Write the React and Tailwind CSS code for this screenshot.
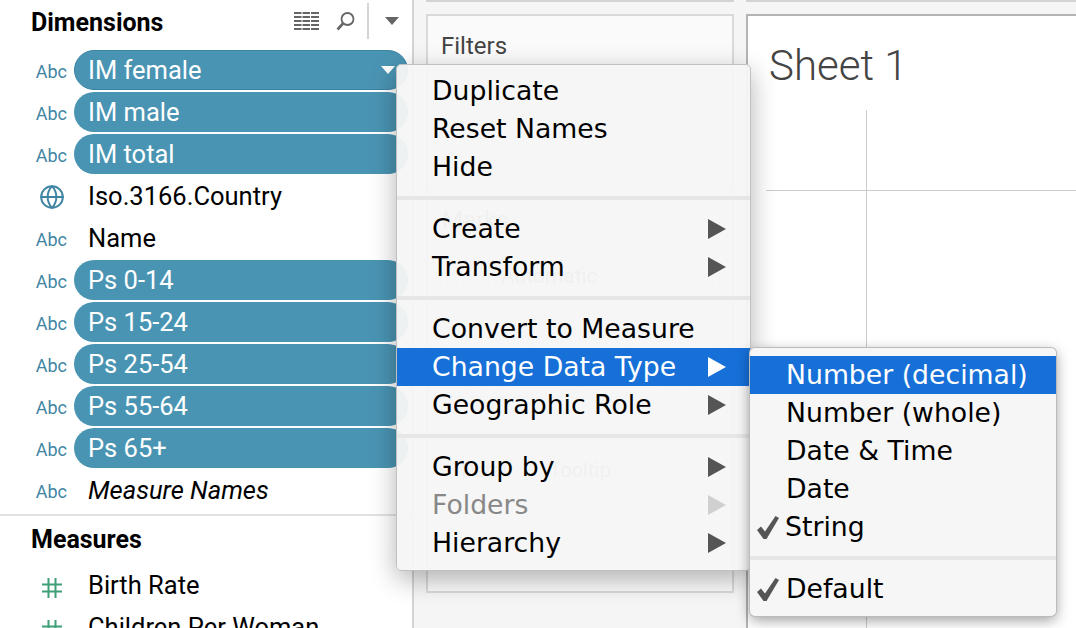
import { Globe } from 'lucide-react';

const fields = [
  { name: 'IM female', pill: true, first: true },
  { name: 'IM male', pill: true },
  { name: 'IM total', pill: true },
  { name: 'Iso.3166.Country', globe: true },
  { name: 'Name' },
  { name: 'Ps 0-14', pill: true },
  { name: 'Ps 15-24', pill: true },
  { name: 'Ps 25-54', pill: true },
  { name: 'Ps 55-64', pill: true },
  { name: 'Ps 65+', pill: true },
  { name: 'Measure Names', italic: true },
];

const mainMenu = [
  [{ label: 'Duplicate' }, { label: 'Reset Names' }, { label: 'Hide' }],
  [{ label: 'Create', sub: true }, { label: 'Transform', sub: true }],
  [{ label: 'Convert to Measure' }, { label: 'Change Data Type', sub: true, active: true }, { label: 'Geographic Role', sub: true }],
  [{ label: 'Group by', sub: true }, { label: 'Folders', sub: true, disabled: true }, { label: 'Hierarchy', sub: true }],
];

const TableIcon = () => (
  <svg width="25" height="18" viewBox="0 0 25 18" fill="#666">
    {[0, 4, 8, 12, 16].map((y) => (
      <g key={y}>
        <rect x="0" y={y} width="7.500" height="2" />
        <rect x="8.500" y={y} width="7.500" height="2" />
        <rect x="17" y={y} width="8" height="2" />
      </g>
    ))}
  </svg>
);

const SearchIcon = () => (
  <svg width="20" height="20" viewBox="0 0 20 20" fill="none" stroke="#666">
    <circle cx="11.500" cy="8" r="6" strokeWidth="1.800" />
    <path d="M7 12.500L1.500 18.500" strokeWidth="2.600" />
  </svg>
);

const Caret = ({ color = '#666', className = '' }) => (
  <svg width="14" height="8" viewBox="0 0 14 8" className={className}>
    <path d="M0 0H14L7 8Z" fill={color} />
  </svg>
);

const Arrow = ({ color = '#555' }) => (
  <svg width="18" height="20" viewBox="0 0 18 20">
    <path d="M0 0L18 10L0 20Z" fill={color} />
  </svg>
);

const Check = () => (
  <svg width="22" height="23" viewBox="0 0 22 23" className="absolute left-[7px] top-[8px]">
    <path d="M0 14L4 10.500L8 15.500L18.500 0L22 2L9.500 23H6.500Z" fill="#555" />
  </svg>
);

const HashIcon = () => (
  <svg width="20" height="20" viewBox="0 0 20 20" stroke="#3f9f78" strokeWidth="2">
    <path d="M0 6.500H20M0 13.500H20M6.500 0V20M13.500 0V20" />
  </svg>
);

const FieldRow = ({ field }) => (
  <div className="h-[42px] flex items-center shrink-0">
    <div className="w-[74px] flex justify-end pr-[7px] pt-[2px] text-[18px] text-[#3f85a3] font-['Roboto',sans-serif]">
      {field.globe ? <Globe size={26} strokeWidth={1.800} className="mr-[2px]" /> : 'Abc'}
    </div>
    {field.pill ? (
      <div className={`w-[334px] h-[40px] rounded-[20px] bg-[#4a94b3] flex items-center justify-between text-white ${field.first ? 'border border-[#3b84a3] pl-[13px] pr-[12px]' : 'pl-[14px] pr-[14px]'}`}>
        <span>{field.name}</span>
        {field.first && <Caret color="#ffffff" />}
      </div>
    ) : (
      <span className={`pl-[14px] text-black ${field.italic ? 'italic' : ''}`}>{field.name}</span>
    )}
  </div>
);

const MarksGhost = () => (
  <div className="text-[#888]">
    <div className="px-[14px] pt-[16px] text-[24px]">Marks</div>
    <div className="mx-[12px] mt-[22px] h-[34px] border border-[#ccc] flex items-center pl-[22px] gap-[12px] text-[21px]">
      <div className="w-[26px] h-[26px] border border-[#ccc]" />
      Automatic
    </div>
    <div className="mx-[12px] mt-[13px] grid grid-cols-3 text-[20px] text-center">
      <div className="h-[90px] border border-[#ddd] flex items-end justify-center pb-[1px]">Color</div>
      <div className="h-[90px] border border-[#ddd] flex items-end justify-center pb-[1px]">Size</div>
      <div className="h-[90px] border border-[#ddd] flex items-end justify-center pb-[1px]">Text</div>
      <div className="h-[90px] border border-[#ddd] flex items-end justify-center pb-[1px]">Detail</div>
      <div className="h-[90px] border border-[#ddd] flex items-end justify-center pb-[1px]">Tooltip</div>
    </div>
  </div>
);

const MenuRow = ({ item }) => (
  <div className={`h-[38px] pl-[35px] pr-[24px] flex items-center justify-between ${item.active ? 'bg-[#1670d8] text-white' : item.disabled ? 'text-[#888]' : 'text-black'}`}>
    <span>{item.label}</span>
    {item.sub && <Arrow color={item.active ? '#ffffff' : item.disabled ? '#d0d0d0' : '#555555'} />}
  </div>
);

const App = () => {
  return (
    <div className="relative w-[1076px] h-[628px] overflow-hidden flex bg-white font-['Roboto',sans-serif] text-[25.5px]">
      {/* data pane */}
      <aside className="w-[414px] shrink-0 border-r-2 border-[#d4d4d4] flex flex-col overflow-hidden">
        <div className="h-[49px] shrink-0 flex items-center pl-[31px] pr-[13px]">
          <h2 className="text-[25px] font-bold text-black flex-1 mb-[4px]">Dimensions</h2>
          <div className="flex items-center mb-[7px]">
            <TableIcon />
            <div className="ml-[17px]"><SearchIcon /></div>
            <div className="w-[2px] h-[36px] bg-[#d4d4d4] ml-[11px] mr-[16px]" />
            <Caret />
          </div>
        </div>
        {fields.map((field) => (
          <FieldRow key={field.name} field={field} />
        ))}
        <div className="h-[2px] bg-[#e2e2e2] mt-[3px] shrink-0" />
        <h2 className="text-[25px] font-bold text-black pl-[31px] pt-[5px] h-[47px] shrink-0">Measures</h2>
        {['Birth Rate', 'Children Per Woman'].map((name) => (
          <div key={name} className="h-[42px] flex items-center shrink-0">
            <div className="w-[74px] pl-[42px] pt-[8px]"><HashIcon /></div>
            <span className="pl-[14px] pt-[2px] text-black">{name}</span>
          </div>
        ))}
      </aside>

      {/* shelves */}
      <section className="w-[332px] shrink-0 bg-[#f5f5f5] flex flex-col px-[12px]">
        <div className="h-[2px] bg-[#d4d4d4] shrink-0" />
        <div className="mt-[12px] h-[579px] border-2 border-[#d9d9d9] bg-[#fafafa] flex flex-col">
          <div className="h-[170px] shrink-0 pl-[13px] pt-[12px] text-[24px] text-[#444] border-b-2 border-[#e2e2e2]">Filters</div>
          <MarksGhost />
        </div>
      </section>

      {/* worksheet */}
      <section className="flex-1 bg-[#f5f5f5] flex flex-col">
        <div className="h-[2px] bg-[#d4d4d4] shrink-0" />
        <div className="mt-[12px] flex-1 bg-white border-t-2 border-l-2 border-[#b4b4b4] pl-[18px] flex flex-col">
          <h1 className="text-[42px] font-light text-[#444] pl-[3px] pt-[18px] h-[94px] shrink-0">Sheet 1</h1>
          <div className="flex-1 grid grid-cols-[101px_1fr] grid-rows-[81px_1fr]">
            <div className="border-r border-b border-[#cccccc]" />
            <div className="border-b border-[#cccccc]" />
            <div className="border-r border-[#cccccc]" />
            <div />
          </div>
        </div>
      </section>

      {/* field context menu */}
      <div className="absolute left-[396px] top-[64px] w-[355px] h-[507px] rounded-[5px] bg-[#f6f6f6]/95 border border-[#c0c0c0] shadow-[0_8px_26px_rgba(0,0,0,0.3)] font-['DejaVu_Sans',sans-serif] text-[26.7px] pt-[7px]">
        {mainMenu.map((group, i) => (
          <div key={i} className={i > 0 ? 'border-t-4 border-[#e6e6e6] mt-[10px] pt-[10px]' : ''}>
            {group.map((item) => (
              <MenuRow key={item.label} item={item} />
            ))}
          </div>
        ))}
      </div>

      {/* data type submenu */}
      <div className="absolute left-[750px] top-[348px] w-[306px] h-[268px] rounded-[5px] bg-[#f6f6f6] shadow-[0_0_0_1px_#bbbbbb,0_4px_14px_rgba(0,0,0,0.4)] font-['DejaVu_Sans',sans-serif] text-[26.7px] text-black pt-[8px]">
        <div className="h-[38px] pl-[36px] flex items-center bg-[#1670d8] text-white">Number (decimal)</div>
        <div className="h-[38px] pl-[36px] flex items-center">Number (whole)</div>
        <div className="h-[38px] pl-[36px] flex items-center">Date &amp; Time</div>
        <div className="h-[38px] pl-[36px] flex items-center">Date</div>
        <div className="relative h-[38px] pl-[35px] flex items-center"><Check />String</div>
        <div className="border-t-4 border-[#e6e6e6] mt-[10px] pt-[10px]">
          <div className="relative h-[38px] pl-[36px] flex items-center"><Check />Default</div>
        </div>
      </div>
    </div>
  );
};

export default App;
